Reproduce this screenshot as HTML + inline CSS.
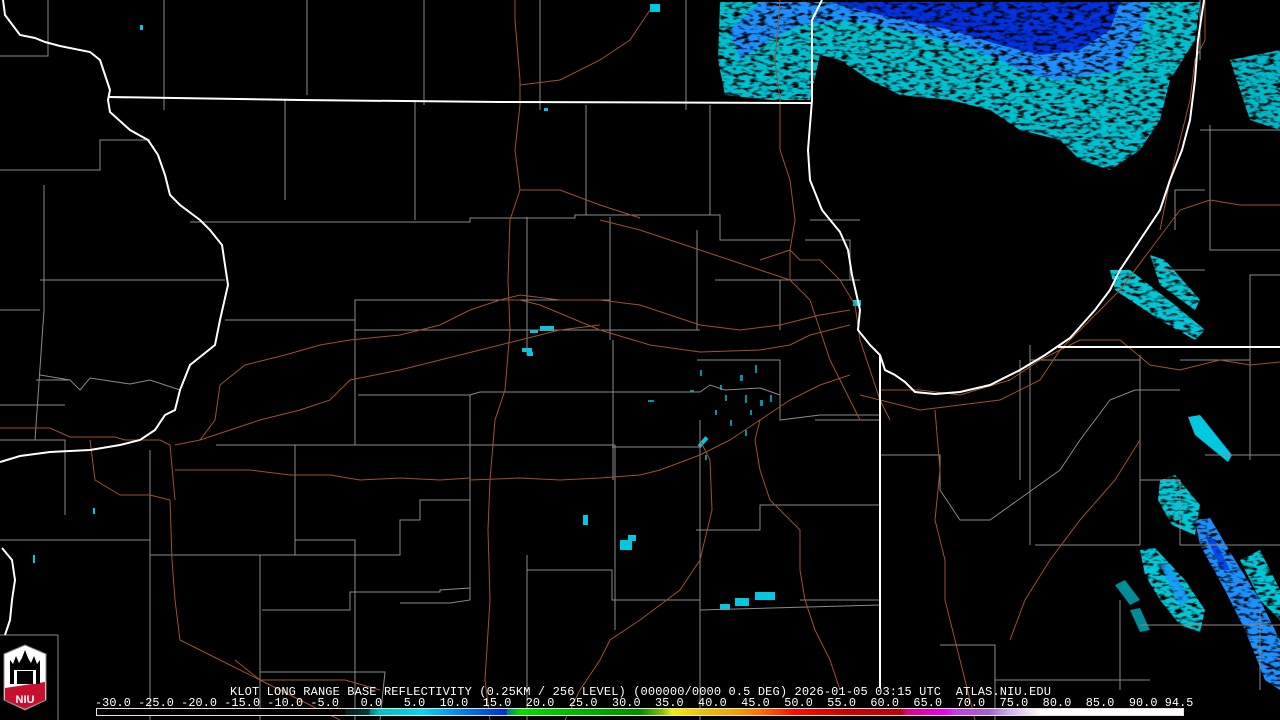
<!DOCTYPE html>
<html><head><meta charset="utf-8"><style>
html,body{margin:0;padding:0;background:#000;width:1280px;height:720px;overflow:hidden}
.t{position:absolute;font-family:"Liberation Mono","DejaVu Sans Mono",monospace;color:#fff;white-space:pre;line-height:12px}
</style></head><body>
<svg width="1280" height="720" style="position:absolute;left:0;top:0" xmlns="http://www.w3.org/2000/svg">
<defs>
<filter id="n" x="0" y="0" width="1280" height="720" filterUnits="userSpaceOnUse">
<feTurbulence type="fractalNoise" baseFrequency="0.12 0.3" numOctaves="2" seed="3" result="t"/>
<feColorMatrix in="t" type="matrix" values="0 0 0 0 0  0 0 0 0 0  0 0 0 0 0  0 0 0 -4 2.9" result="m"/>
<feComposite in="SourceGraphic" in2="m" operator="in"/>
</filter>
</defs>
<g filter="url(#n)">
<path d="M720,2 L1200,2 L1195,40 L1170,80 L1160,120 L1140,150 L1110,170 L1080,160 L1060,140 L1020,130 L990,110 L950,100 L900,95 L870,80 L840,60 L820,55 L810,100 L770,100 L725,95 L718,60 Z" fill="#00c0d0"/>
<path d="M760,2 L1150,2 L1140,40 L1120,70 L1090,75 L1060,80 L1030,75 L1000,60 L960,45 L900,30 L850,20 L800,25 L770,40 L740,60 L730,30 Z" fill="#1e90ff"/>
<path d="M830,2 L1120,2 L1110,30 L1080,50 L1040,55 L1000,45 L950,30 L880,15 Z" fill="#0030e0"/>
<path d="M1230,60 L1280,50 L1280,130 L1250,120 Z" fill="#00b8c8"/>
<path d="M1110,270 L1130,270 L1175,305 L1205,330 L1195,340 L1160,320 L1115,290 Z" fill="#00c8d8"/>
<path d="M1150,255 L1165,260 L1200,300 L1195,310 L1160,285 Z" fill="#00c8d8"/>
<path d="M1160,480 L1175,475 L1200,505 L1195,535 L1172,525 L1158,500 Z" fill="#00c8d8"/>
<path d="M1195,520 L1210,518 L1235,560 L1260,600 L1280,640 L1280,690 L1265,680 L1245,630 L1225,590 L1200,545 Z" fill="#1e90ff"/>
<path d="M1140,550 L1155,548 L1185,580 L1205,610 L1200,632 L1180,625 L1160,600 L1145,575 Z" fill="#00c8d8"/>
<path d="M1240,560 L1260,550 L1280,590 L1280,620 L1260,600 Z" fill="#00c8d8"/>
</g>
<g>
<path d="M1188,417 L1200,415 L1232,455 L1228,462 L1195,435 Z" fill="#00c8e0"/>
<path d="M1160,565 L1170,565 L1190,600 L1180,605 Z" fill="#1e90ff" opacity="0.7"/>
<path d="M1205,535 L1215,540 L1230,570 L1222,570 Z" fill="#0030e0" opacity="0.7"/>
<path d="M1115,585 L1125,580 L1140,600 L1130,605 Z" fill="#00c8d8" opacity="0.7"/>
<path d="M1130,610 L1140,608 L1150,630 L1140,632 Z" fill="#00c8d8" opacity="0.7"/>
</g>
<g fill="#00c8e0">
<rect x="540" y="326" width="14" height="5"/><rect x="530" y="330" width="8" height="3"/><rect x="522" y="348" width="10" height="4"/><rect x="527" y="352" width="6" height="4"/>
<rect x="583" y="515" width="5" height="10"/><rect x="620" y="540" width="12" height="10"/><rect x="628" y="535" width="8" height="6"/>
<rect x="735" y="598" width="14" height="8"/><rect x="755" y="592" width="20" height="8"/><rect x="720" y="604" width="10" height="6"/>
<rect x="697" y="440" width="12" height="4" transform="rotate(-50 703 442)"/>
<rect x="650" y="4" width="10" height="8"/><rect x="140" y="25" width="3" height="5"/><rect x="544" y="108" width="4" height="3"/>
<rect x="853" y="300" width="8" height="6"/><rect x="93" y="508" width="2" height="6"/><rect x="33" y="555" width="2" height="8"/>
</g>
<g fill="#00b8d0" opacity="0.8">
<rect x="700" y="370" width="2" height="6"/><rect x="720" y="385" width="2" height="5"/><rect x="740" y="375" width="3" height="6"/><rect x="755" y="365" width="2" height="8"/><rect x="745" y="395" width="2" height="8"/><rect x="730" y="420" width="2" height="6"/><rect x="760" y="400" width="3" height="6"/><rect x="715" y="410" width="2" height="5"/><rect x="745" y="430" width="2" height="6"/><rect x="705" y="455" width="2" height="5"/><rect x="690" y="390" width="4" height="2"/><rect x="770" y="395" width="2" height="7"/><rect x="725" y="395" width="2" height="6"/><rect x="750" y="410" width="2" height="5"/><rect x="648" y="400" width="6" height="2"/>
</g>
<g stroke="#8a8a8a" stroke-width="1" fill="none">
<path d="M164,0 V110 M307,0 V95 M424,0 V105 M540,0 V110 M686,0 V110 M1200,60 V0"/>
<path d="M0,56 H48 V0"/>
<path d="M0,170 H100 V140 H150 M285,100 V200 M415,100 V220 M586,105 V215 M710,105 V215"/>
<path d="M190,222 H470 V218 H575 V215 H720 V240 H790"/>
<path d="M44,185 V310 L35,440 M40,280 H225 M0,310 H40"/>
<path d="M225,320 H355 V300 H610 V310"/>
<path d="M355,300 V445 M470,395 V555 M40,375 L70,380 L80,390 L90,378 L130,384 L150,380 L180,390 M36,380 H70"/>
<path d="M0,440 H65 V515 M0,405 H65"/>
<path d="M216,445 H470 M295,445 V555 M150,450 V720 M0,540 H150"/>
<path d="M150,555 H295 V540 H355 L355,720"/>
<path d="M610,217 V340 M527,217 V355 M697,230 V330 M613,340 V480 M697,360 H780 V395"/>
<path d="M355,330 H700 M358,395 H470 L480,392 H700 L710,385 L725,390 L760,388 L780,395"/>
<path d="M470,445 H615 M615,445 V630 M470,540 V600 L450,603 H400"/>
<path d="M612,447 H700 M700,420 V720"/>
<path d="M0,635 H58 V720 M260,555 V720 M295,555 H400 V520 H420 V500 H470"/>
<path d="M262,610 H350 V592 H440 V590 L470,588"/>
<path d="M260,672 H385 L380,720"/>
<path d="M527,555 V720 M527,570 H612 V600 H700"/>
<path d="M780,395 V420 L820,415 H880 M815,420 H880"/>
<path d="M696,530 H760 V505 L800,505 H880 M800,600 L880,600 M700,610 L880,605"/>
<path d="M880,455 H940 V490 L960,520 L990,520 L1060,470 L1080,440 L1110,400 L1135,390 H1180"/>
<path d="M940,645 H995 V720 M995,680 H1150"/>
<path d="M1035,545 H1140 V480 H1180 V545 H1280 M1120,600 V690"/>
<path d="M1020,360 V480 M1030,345 V545 M1140,355 V480 M1180,360 H1250 V275 H1280 M1210,125 V250 H1280 M1175,230 V190 H1205 M1250,360 V460 M1200,130 H1280 M1160,270 H1205"/>
<path d="M1030,360 H1140 M1205,455 H1280 M1260,610 V690 M1140,625 H1280"/>
<path d="M810,220 H860 M805,240 H850 V280 M780,280 H860 M715,280 H780 V330"/>
</g>
<g stroke="#a0522d" stroke-width="1" fill="none">
<path d="M0,428 H50 L70,437 H115 L125,440 H160 L170,445 L175,500 M90,440 L95,480 L120,495 L150,495 L170,500"/>
<path d="M175,445 L200,440 L230,430 L260,420 L300,410 L330,400 L350,380 L400,370 L440,360 L480,350 L520,340 L560,330 L600,325"/>
<path d="M175,470 L210,470 L250,470 L290,475 L330,475 L360,480 L400,478 L440,480 L470,478"/>
<path d="M470,480 L520,478 L560,480 L600,478 L640,475 L660,470 L700,455 L730,440 L760,420 L790,400 L820,385 L850,375"/>
<path d="M200,440 L215,420 L220,385 L245,365 L285,355 L320,345 L350,340 L400,335 L440,325 L470,310 L500,300 L520,300"/>
<path d="M520,300 L540,305 L600,330 L650,345 L700,352 L760,350 L790,345 L810,335 L850,325"/>
<path d="M500,300 L520,295 L560,300 L600,300 L640,305 L700,325 L740,330 L780,325 L820,315 L850,310"/>
<path d="M515,0 V20 L520,80 L520,105 L515,150 L520,190 L510,220 L508,280 L510,330 L505,390 L495,420 L490,480 L488,530 L490,600 L485,680 L490,720"/>
<path d="M600,220 L640,230 L700,250 L760,270 L790,280 M520,190 L560,190 L600,205 L640,218"/>
<path d="M520,85 L560,80 L600,60 L630,40 L650,10"/>
<path d="M780,0 L775,60 L780,100 L780,150 L790,180 L795,220 L790,250 L790,280 L810,300 L820,330 L830,360 L845,390 L860,420"/>
<path d="M760,260 L790,250 L800,260 L820,260 L840,280 L855,305"/>
<path d="M855,305 L860,340 L870,370 L880,400 L890,420 M860,395 L880,400 L920,410 L960,405 L1000,400 L1040,380 L1060,350 L1090,320 L1120,290 L1150,250 L1180,210 L1210,200 L1240,205 L1280,205"/>
<path d="M880,390 L920,390 L960,395 L1010,380 L1040,360 L1080,340 L1120,340 L1150,365 L1180,370 L1220,360 L1250,365 L1280,362"/>
<path d="M700,440 L710,460 L712,510 L700,560 L680,590 L640,620 L610,640 L600,660 L580,690 L565,720"/>
<path d="M760,420 L755,440 L760,470 L770,500 L800,530 L800,570 L805,600 L815,630 L830,660 L840,690"/>
<path d="M935,410 L940,470 L935,520 L945,560 L945,600 L955,640 L965,680 L975,720"/>
<path d="M1140,440 L1115,480 L1080,520 L1050,560 L1025,600 L1010,640"/>
<path d="M170,500 L172,560 L175,600 L180,640 L220,660 L260,680 L300,700 L340,720"/>
<path d="M235,660 L260,680 L300,680 L345,680 L380,690"/>
<path d="M1205,0 L1205,40 L1195,60 L1190,100 L1180,140 L1170,180 L1160,230"/>
</g>
<g stroke="#fff" stroke-width="2" fill="none">
<path d="M3,0 L5,15 L20,35 L35,38 L45,42 L60,46 L90,52 L100,60 L110,90 L108,100 L110,112 L130,130 L148,140 L158,155 L165,175 L170,195 L180,205 L200,220 L210,230 L222,245 L225,265 L228,285 L220,320 L215,345 L190,365 L180,390 L175,410 L165,415 L155,430 L140,440 L120,445 L90,450 L50,452 L20,456 L0,462"/>
<path d="M108,97 L300,100 L500,102 L812,103"/>
<path d="M822,0 L812,20 L812,100 L808,150 L810,180 L822,210 L840,232 L848,250 L852,275 L860,310 L858,330 L870,345 L880,355 L885,370 L895,375 L905,382 L915,392 L935,394 L960,392 L990,385 L1020,370 L1045,355 L1070,338 L1095,310 L1110,290 L1120,270 L1140,240 L1160,210 L1170,180 L1182,150 L1190,120 L1195,80 L1198,40 L1204,0"/>
<path d="M880,355 V688"/>
<path d="M1058,347 L1280,347"/>
<path d="M2,548 L12,560 L15,580 L12,600 L10,620 L5,635"/>
</g>
<g>
<path d="M4,654 L25,645 L46,654 V700 L25,710 L4,700 Z" fill="#fff" stroke="#888" stroke-width="1"/>
<path d="M5,688 L45,682 V700 L25,709 L5,700 Z" fill="#c8102e"/>
<rect x="10" y="668" width="30" height="16" fill="#000"/>
<rect x="14" y="670" width="22" height="14" fill="#fff"/>
<rect x="17" y="671" width="16" height="13" fill="#000"/>
<path d="M10,668 V660 L13,664 L16,656 L19,663 L22,658 L25,650 L28,658 L31,663 L34,656 L37,664 L40,660 V668 Z" fill="#000"/>
<text x="25" y="703" font-family="Liberation Sans,sans-serif" font-weight="bold" font-size="11" fill="#fff" text-anchor="middle">NIU</text>
</g>
<defs><linearGradient id="cb" x1="96" x2="1184" gradientUnits="userSpaceOnUse">
<stop offset="0" stop-color="#000"/>
<stop offset="0.228" stop-color="#000"/>
<stop offset="0.23" stop-color="#002020"/>
<stop offset="0.251" stop-color="#004040"/>
<stop offset="0.252" stop-color="#008080"/>
<stop offset="0.26" stop-color="#00c0c8"/>
<stop offset="0.30" stop-color="#00d8f0"/>
<stop offset="0.33" stop-color="#0090f0"/>
<stop offset="0.377" stop-color="#0030d0"/>
<stop offset="0.378" stop-color="#008080"/>
<stop offset="0.39" stop-color="#00e000"/>
<stop offset="0.43" stop-color="#00c000"/>
<stop offset="0.50" stop-color="#009000"/>
<stop offset="0.52" stop-color="#80c000"/>
<stop offset="0.53" stop-color="#f0f000"/>
<stop offset="0.56" stop-color="#e8c000"/>
<stop offset="0.59" stop-color="#f0a000"/>
<stop offset="0.61" stop-color="#ff7000"/>
<stop offset="0.64" stop-color="#ff1000"/>
<stop offset="0.69" stop-color="#d00000"/>
<stop offset="0.74" stop-color="#c00010"/>
<stop offset="0.745" stop-color="#e00080"/>
<stop offset="0.78" stop-color="#f000f0"/>
<stop offset="0.79" stop-color="#c040e0"/>
<stop offset="0.82" stop-color="#a060d0"/>
<stop offset="0.84" stop-color="#d0b0f0"/>
<stop offset="0.86" stop-color="#f0e8f8"/>
<stop offset="0.87" stop-color="#fff"/>
<stop offset="1" stop-color="#fff"/>
</linearGradient></defs>
<rect x="96.5" y="708.5" width="1087" height="7" fill="url(#cb)" stroke="#f0e0d8" stroke-width="1"/>
</svg>
<div class="t" style="left:230px;top:686px;font-size:12px;letter-spacing:0.13px">KLOT LONG RANGE BASE REFLECTIVITY (0.25KM / 256 LEVEL) (000000/0000 0.5 DEG) 2026-01-05 03:15 UTC  ATLAS.NIU.EDU</div>
<div class="t" style="left:95px;top:697px;font-size:11.8px;letter-spacing:0.1px">-30.0 -25.0 -20.0 -15.0 -10.0 -5.0   0.0   5.0  10.0  15.0  20.0  25.0  30.0  35.0  40.0  45.0  50.0  55.0  60.0  65.0  70.0  75.0  80.0  85.0  90.0 94.5</div>
</body></html>
